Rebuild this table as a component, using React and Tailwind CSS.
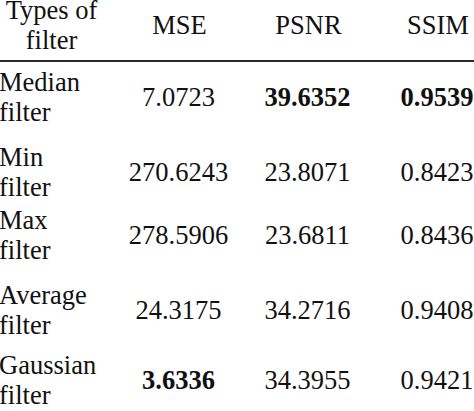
import React from "react";

const rows = [
  { name: "Median", mse: "7.0723", psnr: "39.6352", ssim: "0.9539", bold: ["psnr", "ssim"], gap: "mt-[6px]" },
  { name: "Min", mse: "270.6243", psnr: "23.8071", ssim: "0.8423", bold: [], gap: "mt-[16px]" },
  { name: "Max", mse: "278.5906", psnr: "23.6811", ssim: "0.8436", bold: [], gap: "mt-[4px]" },
  { name: "Average", mse: "24.3175", psnr: "34.2716", ssim: "0.9408", bold: [], gap: "mt-[16px]" },
  { name: "Gaussian", mse: "3.6336", psnr: "34.3955", ssim: "0.9421", bold: ["mse"], gap: "mt-[11px]" },
];

const Cell = ({ width, bold, children }) => (
  <div className={`${width} flex items-center justify-center ${bold ? "font-bold" : ""}`}>
    {children}
  </div>
);

const App = () => {
  return (
    <div className="w-[474px] h-[411px] overflow-hidden bg-white text-[#111] font-['Liberation_Serif','Times_New_Roman',serif]">
      <div className="w-[515px] -mt-[4px] text-[26.5px] leading-[29.5px]">
        {/* Header */}
        <div className="flex h-[59px]">
          <div className="w-[103px] flex flex-col items-center justify-center text-center">
            <span>Types of</span>
            <span>filter</span>
          </div>
          <Cell width="w-[153px]">MSE</Cell>
          <Cell width="w-[105px]">PSNR</Cell>
          <Cell width="w-[154px]">SSIM</Cell>
        </div>

        <div className="mt-[5px] h-[2px] bg-[#2a2a2a]" />

        {/* Body */}
        {rows.map((r) => (
          <div key={r.name} className={`flex h-[59px] ${r.gap}`}>
            <div className="w-[103px] flex flex-col justify-center -ml-px">
              <span>{r.name}</span>
              <span>filter</span>
            </div>
            <Cell width="w-[153px]" bold={r.bold.includes("mse")}>{r.mse}</Cell>
            <Cell width="w-[105px]" bold={r.bold.includes("psnr")}>{r.psnr}</Cell>
            <Cell width="w-[154px]" bold={r.bold.includes("ssim")}>{r.ssim}</Cell>
          </div>
        ))}
      </div>
    </div>
  );
};

export default App;
